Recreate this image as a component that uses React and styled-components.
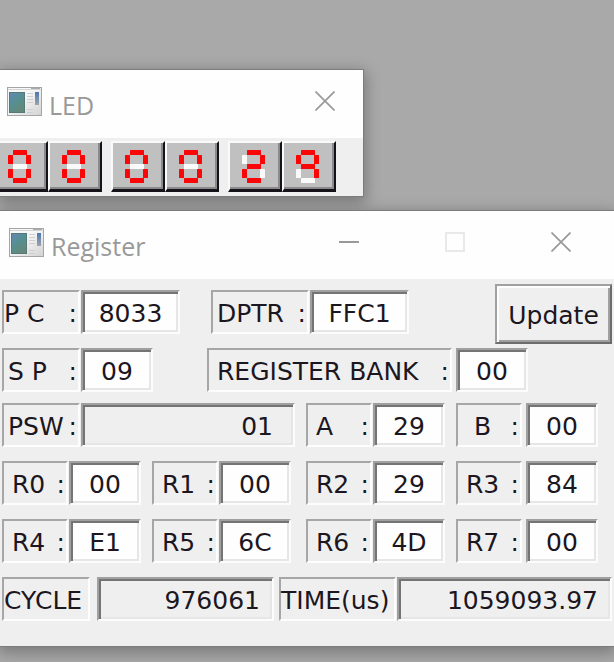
import React from "react";
import styled, { createGlobalStyle } from "styled-components";

const GlobalStyle = createGlobalStyle`
  * { box-sizing: border-box; }
  body {
    margin: 0;
    background: #a8a9a8;
    color: #1c1620;
    font-family: "DejaVu Sans", Verdana, sans-serif;
    font-size: 25px;
  }
  button, input { font: inherit; color: inherit; margin: 0; }
`;

const Desktop = styled.main`
  display: flex;
  flex-direction: column;
  align-items: flex-start;
  gap: 13px;
  min-height: 100vh;
  padding-top: 69px;
  overflow: hidden;
`;

const Window = styled.section`
  width: ${(p) => (p.$fill ? "100%" : "auto")};
  background: #efefef;
  border: solid #7c7c7c;
  border-width: ${(p) => (p.$fill ? "1px 0" : "1px 1px 1px 0")};
  box-shadow: 0 4px 14px 2px rgba(0, 0, 0, 0.28);
`;

const TitleBar = styled.header`
  display: flex;
  align-items: center;
  height: 68px;
  padding-left: ${(p) => p.$inset}px;
  padding-bottom: 5px;
  background: #fefefe;
`;

const Title = styled.h1`
  flex: 1;
  margin: 0 0 0 6px;
  padding-top: 6px;
  color: #999;
  font-family: "Open Sans", "Segoe UI", sans-serif;
  font-size: 25px;
  font-weight: 400;
  line-height: 34px;
`;

const CaptionButton = styled.button`
  display: flex;
  align-items: center;
  justify-content: center;
  width: ${(p) => (p.$narrow ? 76 : 106)}px;
  height: 60px;
  padding: 0 0 2px;
  border: 0;
  background: transparent;
  color: ${(p) => (p.disabled ? "#e9e9e9" : "#999")};
`;

const LedPanel = styled.div`
  display: flex;
  gap: 9px;
  height: 58px;
  margin-left: -6px;
  padding: 3px 27px 0 0;
`;

const LedPair = styled.div`
  display: flex;
`;

const LedTile = styled.div`
  display: flex;
  align-items: center;
  justify-content: center;
  width: 54px;
  height: 51px;
  padding-right: 4px;
  background: #c0c0c0;
  border: solid;
  border-width: 2px 2px 3px 2px;
  border-color: #fafafa #16121a #16121a #fafafa;
  box-shadow: inset -2px -2px 0 #8a8a8a;
`;

const Form = styled.form`
  padding: 5px 2px 25px;
`;

const Row = styled.div`
  display: grid;
  grid-template-columns: ${(p) => p.$columns};
  align-items: start;
  margin-top: ${(p) => p.$gap}px;
`;

const Group = styled.div`
  display: flex;
  gap: ${(p) => p.$gap || 1}px;
  padding-top: ${(p) => (p.$lowered ? 6 : 0)}px;
`;

const Label = styled.label`
  display: flex;
  justify-content: space-between;
  flex: none;
  width: ${(p) => p.$width}px;
  height: 44px;
  padding-left: ${(p) => p.$indent}px;
  padding-right: ${(p) => (p.$colon ? 1 : 0)}px;
  border: 2px solid;
  border-color: #a6a6a6 #fdfdfd #fdfdfd #a6a6a6;
  line-height: 43px;
  white-space: pre;
`;

const Field = styled.input`
  flex: ${(p) => (p.$width ? "none" : "1")};
  width: ${(p) => (p.$width ? `${p.$width}px` : "0")};
  min-width: 0;
  height: 44px;
  padding: 2px ${(p) => (p.$right ? p.$right : 0)}px 0 0;
  text-align: ${(p) => (p.$right ? "right" : "center")};
  background: ${(p) => (p.readOnly ? "#efefef" : "#fefefe")};
  border: 2px solid;
  border-color: #a0a0a0 #fcfcfc #fcfcfc #a0a0a0;
  border-radius: 0;
  box-shadow: inset 2px 2px 0 #747474, inset -2px -2px 0 #e6e6e6;
  outline: 0;
`;

const UpdateButton = styled.button`
  height: 60px;
  padding: 2px 0 0;
  background: #efefef;
  border: 2px solid;
  border-color: #a0a0a0 #6c6c6c #6c6c6c #a0a0a0;
  border-radius: 0;
  box-shadow: inset 2px 2px 0 #fdfdfd, inset -2px -2px 0 #a0a0a0;
`;

function AppIcon() {
  return (
    <svg width="36" height="30" viewBox="0 0 36 30" aria-hidden="true">
      <defs>
        <linearGradient id="pane" x1="0" y1="0" x2="0.6" y2="1">
          <stop offset="0" stopColor="#6488b4" />
          <stop offset="0.5" stopColor="#558f92" />
          <stop offset="1" stopColor="#658878" />
        </linearGradient>
        <linearGradient id="chip" x1="0" y1="0" x2="0" y2="1">
          <stop offset="0" stopColor="#4d78ad" />
          <stop offset="1" stopColor="#9da5ad" />
        </linearGradient>
        <linearGradient id="frame" x1="0" y1="0" x2="1" y2="1">
          <stop offset="0.4" stopColor="#f7f7f7" />
          <stop offset="1" stopColor="#d2d2d2" />
        </linearGradient>
      </defs>
      <rect x="0.5" y="0.5" width="34" height="28" fill="url(#frame)" stroke="#a5a5a5" />
      <path d="M1 2.5h33" stroke="#d5d5d5" />
      <path d="M24 1.5h9" stroke="#aaa" />
      <rect x="2.5" y="5.5" width="15" height="20" fill="url(#pane)" stroke="#557878" />
      <path d="M20 6.5h6M20 9.5h6M20 12.5h6M20 15.5h6M20 22.5h6M20 25.5h6" stroke="#cfcfcf" />
      <rect x="28" y="5" width="4" height="13" fill="url(#chip)" />
    </svg>
  );
}

const CloseIcon = () => (
  <svg width="20" height="20" viewBox="0 0 20 20" stroke="currentColor" strokeWidth="1.7">
    <path d="M0.5 0.5l19 19M19.5 0.5l-19 19" />
  </svg>
);

const MinimizeIcon = () => (
  <svg width="20" height="20" viewBox="0 0 20 20" stroke="currentColor" strokeWidth="2">
    <path d="M0 10h20" />
  </svg>
);

const MaximizeIcon = () => (
  <svg width="20" height="20" viewBox="0 0 20 20" fill="none" stroke="currentColor" strokeWidth="2">
    <rect x="1" y="1" width="18" height="18" />
  </svg>
);

const SEGMENTS = {
  a: [5, 0, 14, 5],
  f: [0, 5, 5, 9],
  b: [18, 5, 5, 9],
  g: [5, 14, 14, 5],
  e: [0, 19, 5, 9],
  c: [18, 19, 5, 9],
  d: [5, 28, 14, 5],
};
const LIT = { 0: "abcdef", 2: "abged", 9: "abcfg" };

function Led({ digit }) {
  const names = Object.keys(SEGMENTS).sort(
    (m, n) => LIT[digit].includes(m) - LIT[digit].includes(n)
  );
  return (
    <LedTile>
      <svg width="23" height="33" viewBox="0 0 23 33" role="img" aria-label={String(digit)}>
        {names.map((name) => {
          const [x, y, width, height] = SEGMENTS[name];
          return (
            <rect
              key={name}
              x={x}
              y={y}
              width={width}
              height={height}
              rx="0.5"
              fill={LIT[digit].includes(name) ? "#fb0606" : "#fafafa"}
            />
          );
        })}
      </svg>
    </LedTile>
  );
}

function Register({ id, name, colon = true, value, labelWidth, indent = 8, gap, width, right, readOnly, lowered }) {
  return (
    <Group $gap={gap} $lowered={lowered}>
      <Label htmlFor={id} $width={labelWidth} $indent={indent} $colon={colon}>
        <span>{name}</span>
        {colon && <span>:</span>}
      </Label>
      <Field id={id} defaultValue={value} readOnly={readOnly} $width={width} $right={right} />
    </Group>
  );
}

const QUAD = "150fr 154fr 150fr 156fr";

const BANK = [
  [["R0", "00"], ["R1", "00"], ["R2", "29"], ["R3", "84"]],
  [["R4", "E1"], ["R5", "6C"], ["R6", "4D"], ["R7", "00"]],
];

export default function App() {
  return (
    <>
      <GlobalStyle />
      <Desktop>
        <Window>
          <TitleBar $inset={7}>
            <AppIcon />
            <Title>LED</Title>
            <CaptionButton $narrow aria-label="Close"><CloseIcon /></CaptionButton>
          </TitleBar>
          <LedPanel>
            <LedPair><Led digit={0} /><Led digit={0} /></LedPair>
            <LedPair><Led digit={0} /><Led digit={0} /></LedPair>
            <LedPair><Led digit={2} /><Led digit={9} /></LedPair>
          </LedPanel>
        </Window>

        <Window $fill>
          <TitleBar $inset={9}>
            <AppIcon />
            <Title>Register</Title>
            <CaptionButton aria-label="Minimize"><MinimizeIcon /></CaptionButton>
            <CaptionButton aria-label="Maximize" disabled><MaximizeIcon /></CaptionButton>
            <CaptionButton aria-label="Close"><CloseIcon /></CaptionButton>
          </TitleBar>
          <Form onSubmit={(e) => e.preventDefault()}>
            <Row $columns="209fr 284fr 117fr" $gap={0}>
              <Register id="pc" name="P C" value="8033" labelWidth={78} indent={0} width={99} lowered />
              <Register id="dptr" name="DPTR" value="FFC1" labelWidth={98} indent={4} width={99} lowered />
              <UpdateButton type="submit">Update</UpdateButton>
            </Row>
            <Row $columns="205fr 405fr" $gap={4}>
              <Register id="sp" name="S P" value="09" labelWidth={78} indent={4} width={72} />
              <Register id="bank" name="REGISTER BANK" value="00" labelWidth={245} gap={4} width={72} />
            </Row>
            <Row $columns="304fr 150fr 156fr" $gap={11}>
              <Register id="psw" name="PSW" value="01" labelWidth={78} indent={4} width={214} right={20} readOnly />
              <Register id="a" name="A" value="29" labelWidth={66} width={72} />
              <Register id="b" name="B" value="00" labelWidth={66} indent={16} gap={4} width={72} />
            </Row>
            {BANK.map((cells, i) => (
              <Row key={i} $columns={QUAD} $gap={14}>
                {cells.map(([name, value], col) => (
                  <Register
                    key={name}
                    id={name}
                    name={name}
                    value={value}
                    labelWidth={66}
                    gap={col === 3 ? 4 : 1}
                    width={72}
                  />
                ))}
              </Row>
            ))}
            <Row $columns="277fr 333fr" $gap={14}>
              <Register id="cycle" name="CYCLE" colon={false} value="976061" labelWidth={88} indent={0} gap={7} width={177} right={12} readOnly />
              <Register id="time" name="TIME(us)" colon={false} value="1059093.97" labelWidth={117} indent={0} right={12} readOnly />
            </Row>
          </Form>
        </Window>
      </Desktop>
    </>
  );
}
